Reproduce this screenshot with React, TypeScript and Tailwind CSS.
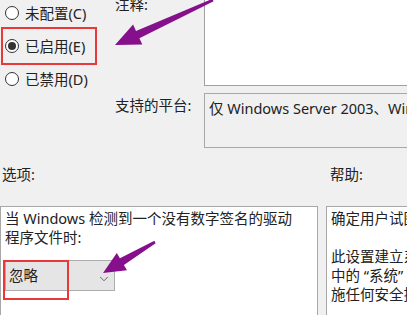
import { ChevronDown } from 'lucide-react';

const font = { fontFamily: '"Noto Sans", "Noto Sans CJK SC", sans-serif' };

function Radio({ label, checked }: { label: string; checked?: boolean }) {
  return (
    <div className="flex items-center gap-[6px] h-[22px] pl-[5px]">
      <span className="w-[14px] h-[14px] rounded-full border border-[#333] bg-white flex items-center justify-center">
        {checked && <span className="w-[8px] h-[8px] rounded-full bg-[#333]" />}
      </span>
      <span>{label}</span>
    </div>
  );
}

export default function App() {
  return (
    <div
      className="relative w-[407px] h-[315px] overflow-hidden bg-[#f0f0f0] text-[14.5px] leading-[19px] text-[#222]"
      style={font}
    >
      {/* top: radios + comment / platform */}
      <div className="flex h-[160px]">
        <div className="w-[112px] flex flex-col pt-[2px] gap-[11px]">
          <Radio label="未配置(C)" />
          <Radio label="已启用(E)" checked />
          <Radio label="已禁用(D)" />
        </div>
        <div className="flex-1 grid grid-cols-[92px_1fr] grid-rows-[86px_auto]">
          <div className="pl-[3px] -mt-[5px]">注释:</div>
          <div className="bg-white border-l border-b border-[#a0a0a0] h-[86px]" />
          <div className="pl-[3px] pt-[10px]">支持的平台:</div>
          <div className="mt-[7px] h-[55px] border-l border-t border-b border-[#a8a8a8] pl-[4px] pt-[5px] whitespace-nowrap overflow-hidden">
            仅 Windows Server 2003、Windows XP
          </div>
        </div>
      </div>

      {/* labels row */}
      <div className="flex h-[46px] pt-[5px]">
        <div className="w-[330px] pl-[2px]">选项:</div>
        <div>帮助:</div>
      </div>

      {/* panels */}
      <div className="flex gap-[8px] h-[120px]">
        <div className="w-[318px] bg-white border-l border-t border-r border-[#a8a8a8] pl-[4px] pt-[2px]">
          <div className="whitespace-nowrap">当 Windows 检测到一个没有数字签名的驱动</div>
          <div>程序文件时:</div>
          <div className="mt-[13px] w-[110px] h-[31px] bg-[#e5e5e5] border border-[#adadad] flex items-center justify-between pl-[3px] pr-[3px]">
            <span>忽略</span>
            <ChevronDown className="w-[14px] h-[14px] text-[#555] mt-[6px]" strokeWidth={1.5} />
          </div>
        </div>
        <div className="flex-1 bg-white border-l border-t border-[#a8a8a8] pl-[4px] pt-[2px] whitespace-nowrap overflow-hidden">
          <div>确定用户试图安装没有数字签名的</div>
          <div className="h-[19px]" />
          <div>此设置建立系统对于任何未签名</div>
          <div>中的 “系统” 控制面板里设置的</div>
          <div>施任何安全措施。</div>
        </div>
      </div>

      {/* annotations */}
      <div className="absolute left-[1px] top-[27px] w-[96px] h-[38px] border-2 border-[#e8383a]" />
      <div className="absolute left-[3px] top-[260px] w-[66px] h-[40px] border-2 border-[#e8383a]" />
      <svg className="absolute inset-0 pointer-events-none" width="407" height="315">
        <polygon
          fill="#86108c"
          points="213.6,1.2 139.4,38.2 142.3,44.6 115,45 133.1,24.6 136,30.9 212.4,-1.2"
        />
        <polygon
          fill="#86108c"
          points="155.6,243.2 123.9,265.1 127,270.3 103,273 116.8,253.1 119.9,258.3 154.4,240.8"
        />
      </svg>
    </div>
  );
}
